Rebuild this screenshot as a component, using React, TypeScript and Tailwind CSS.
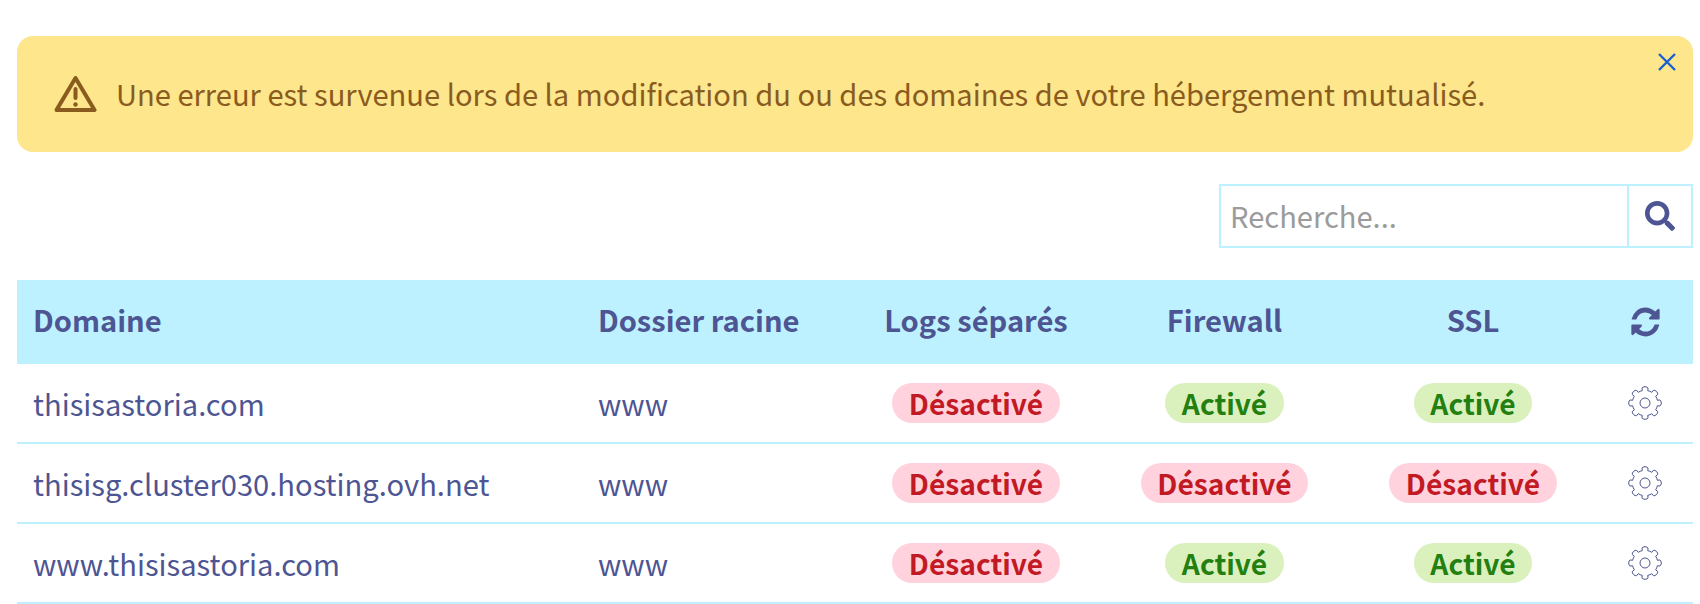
import { FaSearch } from "react-icons/fa";

type Row = { domain: string; logs: boolean; firewall: boolean; ssl: boolean };

const rows: Row[] = [
  { domain: "thisisastoria.com", logs: false, firewall: true, ssl: true },
  { domain: "thisisg.cluster030.hosting.ovh.net", logs: false, firewall: false, ssl: false },
  { domain: "www.thisisastoria.com", logs: false, firewall: true, ssl: true },
];

function gearPath() {
  const c = 17;
  const outer = 16;
  const inner = 12.6;
  const teeth = 8;
  const pts: string[] = [];
  const step = (Math.PI * 2) / teeth;
  const pt = (r: number, a: number) => `${(c + r * Math.sin(a)).toFixed(2)} ${(c - r * Math.cos(a)).toFixed(2)}`;
  for (let i = 0; i < teeth; i++) {
    const a = i * step;
    const startInner = pt(inner, a - step * 0.28);
    const topL = pt(outer, a - step * 0.15);
    const topR = pt(outer, a + step * 0.15);
    const endInner = pt(inner, a + step * 0.28);
    const next = pt(inner + 0.4, a + step * 0.5);
    const nextEnd = pt(inner, a + step * 0.72);
    pts.push(
      `${i === 0 ? "M" : "L"}${startInner} Q${pt(outer + 0.2, a - step * 0.3)} ${topL} Q${pt(outer + 0.8, a)} ${topR} Q${pt(outer + 0.2, a + step * 0.3)} ${endInner} Q${next} ${nextEnd}`
    );
  }
  return pts.join(" ") + " Z";
}

function Gear() {
  return (
    <svg width="34" height="34" viewBox="0 0 34 34" fill="none" stroke="currentColor" strokeWidth="1" className="mx-auto block">
      <path d={gearPath()} />
      <circle cx="17" cy="17" r="5" />
    </svg>
  );
}

function Status({ on }: { on: boolean }) {
  return on ? (
    <span className="mx-auto block h-10 w-fit rounded-[20px] bg-[#daf1bd] px-[16.5px] text-[28.16px] font-bold leading-[39px] text-[#237f10]">
      Activé
    </span>
  ) : (
    <span className="mx-auto block h-10 w-fit rounded-[20px] bg-[#ffd2dd] px-[16.5px] text-[28.16px] font-bold leading-[39px] text-[#c21a24]">
      Désactivé
    </span>
  );
}

const td = "border-b-2 border-[#bdf1ff]";

export default function App() {
  return (
    <div className="h-[604px] overflow-hidden bg-white pl-[17px] pr-[7px] pt-9 font-['Noto_Sans_CJK_JP','Source_Sans_Pro','Noto_Sans',sans-serif] text-[29.12px] text-[#4d5592]">
      <div className="relative flex h-[116px] items-center rounded-2xl bg-[#fde68b] pl-[37px] text-[#8a5b1e]">
        <svg width="43" height="38" viewBox="0 0 43 38" fill="none" className="shrink-0">
          <path d="M21.5 3 L40.5 35 H2.5 Z" stroke="#8a5b1e" strokeWidth="4" strokeLinejoin="round" />
          <path d="M21.5 14 V23" stroke="#8a5b1e" strokeWidth="4" strokeLinecap="round" />
          <circle cx="21.5" cy="29.5" r="2.2" fill="#8a5b1e" />
        </svg>
        <span className="ml-[19px] pb-[2px] leading-9">
          Une erreur est survenue lors de la modification du ou des domaines de votre hébergement mutualisé.
        </span>
        <button className="absolute right-[17px] top-[17px] text-[#1a5fd0]" aria-label="Fermer">
          <svg width="18" height="18" viewBox="0 0 18 18" fill="none" className="block">
            <path d="M1 1 L17 17 M17 1 L1 17" stroke="currentColor" strokeWidth="2.4" />
          </svg>
        </button>
      </div>

      <div className="mt-8 flex justify-end">
        <div className="flex h-16 w-[474px] border-2 border-[#bdf1ff]">
          <input
            placeholder="Recherche..."
            className="min-w-0 flex-1 bg-transparent pl-[9px] text-[29.12px] outline-none placeholder:text-[#9b9b9b]"
          />
          <button className="flex w-[64px] items-center justify-center border-l-2 border-[#bdf1ff]" aria-label="Rechercher">
            <FaSearch size={30} />
          </button>
        </div>
      </div>

      <table className="mt-8 w-[1676px] table-fixed border-separate border-spacing-0">
        <colgroup>
          <col className="w-[565px]" />
          <col className="w-[270px]" />
          <col className="w-[248px]" />
          <col className="w-[249px]" />
          <col className="w-[248px]" />
          <col className="w-[96px]" />
        </colgroup>
        <thead>
          <tr className="h-[84px] bg-[#bdf1ff] font-bold">
            <th className="px-4 pb-[4px] text-left">Domaine</th>
            <th className="px-4 pb-[4px] text-left">Dossier racine</th>
            <th className="pb-[4px] text-center">Logs séparés</th>
            <th className="pb-[4px] text-center">Firewall</th>
            <th className="pb-[4px] text-center">SSL</th>
            <th className="text-center">
              <svg width="33" height="30" viewBox="0 96 1792 1600" fill="currentColor" className="mx-auto block" preserveAspectRatio="none">
                <path d="M1639 1056q0 5-1 7-64 268-268 434.5t-478 166.5q-146 0-282.5-55t-243.5-157l-129 129q-19 19-45 19t-45-19-19-45v-448q0-26 19-45t45-19h448q26 0 45 19t19 45-19 45l-137 137q71 66 161 102t187 36q134 0 250-65t186-179q11-17 53-117 8-23 30-23h192q13 0 22.5 9.5t9.5 22.5zm25-800v448q0 26-19 45t-45 19h-448q-26 0-45-19t-19-45 19-45l138-138q-148-137-349-137-134 0-250 65t-186 179q-11 17-53 117-8 23-30 23h-199q-13 0-22.5-9.5t-9.5-22.5v-7q65-268 270-434.5t480-166.5q146 0 284 55.5t245 156.5l130-129q19-19 45-19t45 19 19 45z" />
              </svg>
            </th>
          </tr>
        </thead>
        <tbody>
          {rows.map((r) => (
            <tr key={r.domain} className="h-20">
              <td className={`${td} px-4 pt-[2px]`}>{r.domain}</td>
              <td className={`${td} px-4 pt-[2px]`}>www</td>
              <td className={td}><Status on={r.logs} /></td>
              <td className={td}><Status on={r.firewall} /></td>
              <td className={td}><Status on={r.ssl} /></td>
              <td className={td}>
                <Gear />
              </td>
            </tr>
          ))}
        </tbody>
      </table>
    </div>
  );
}
